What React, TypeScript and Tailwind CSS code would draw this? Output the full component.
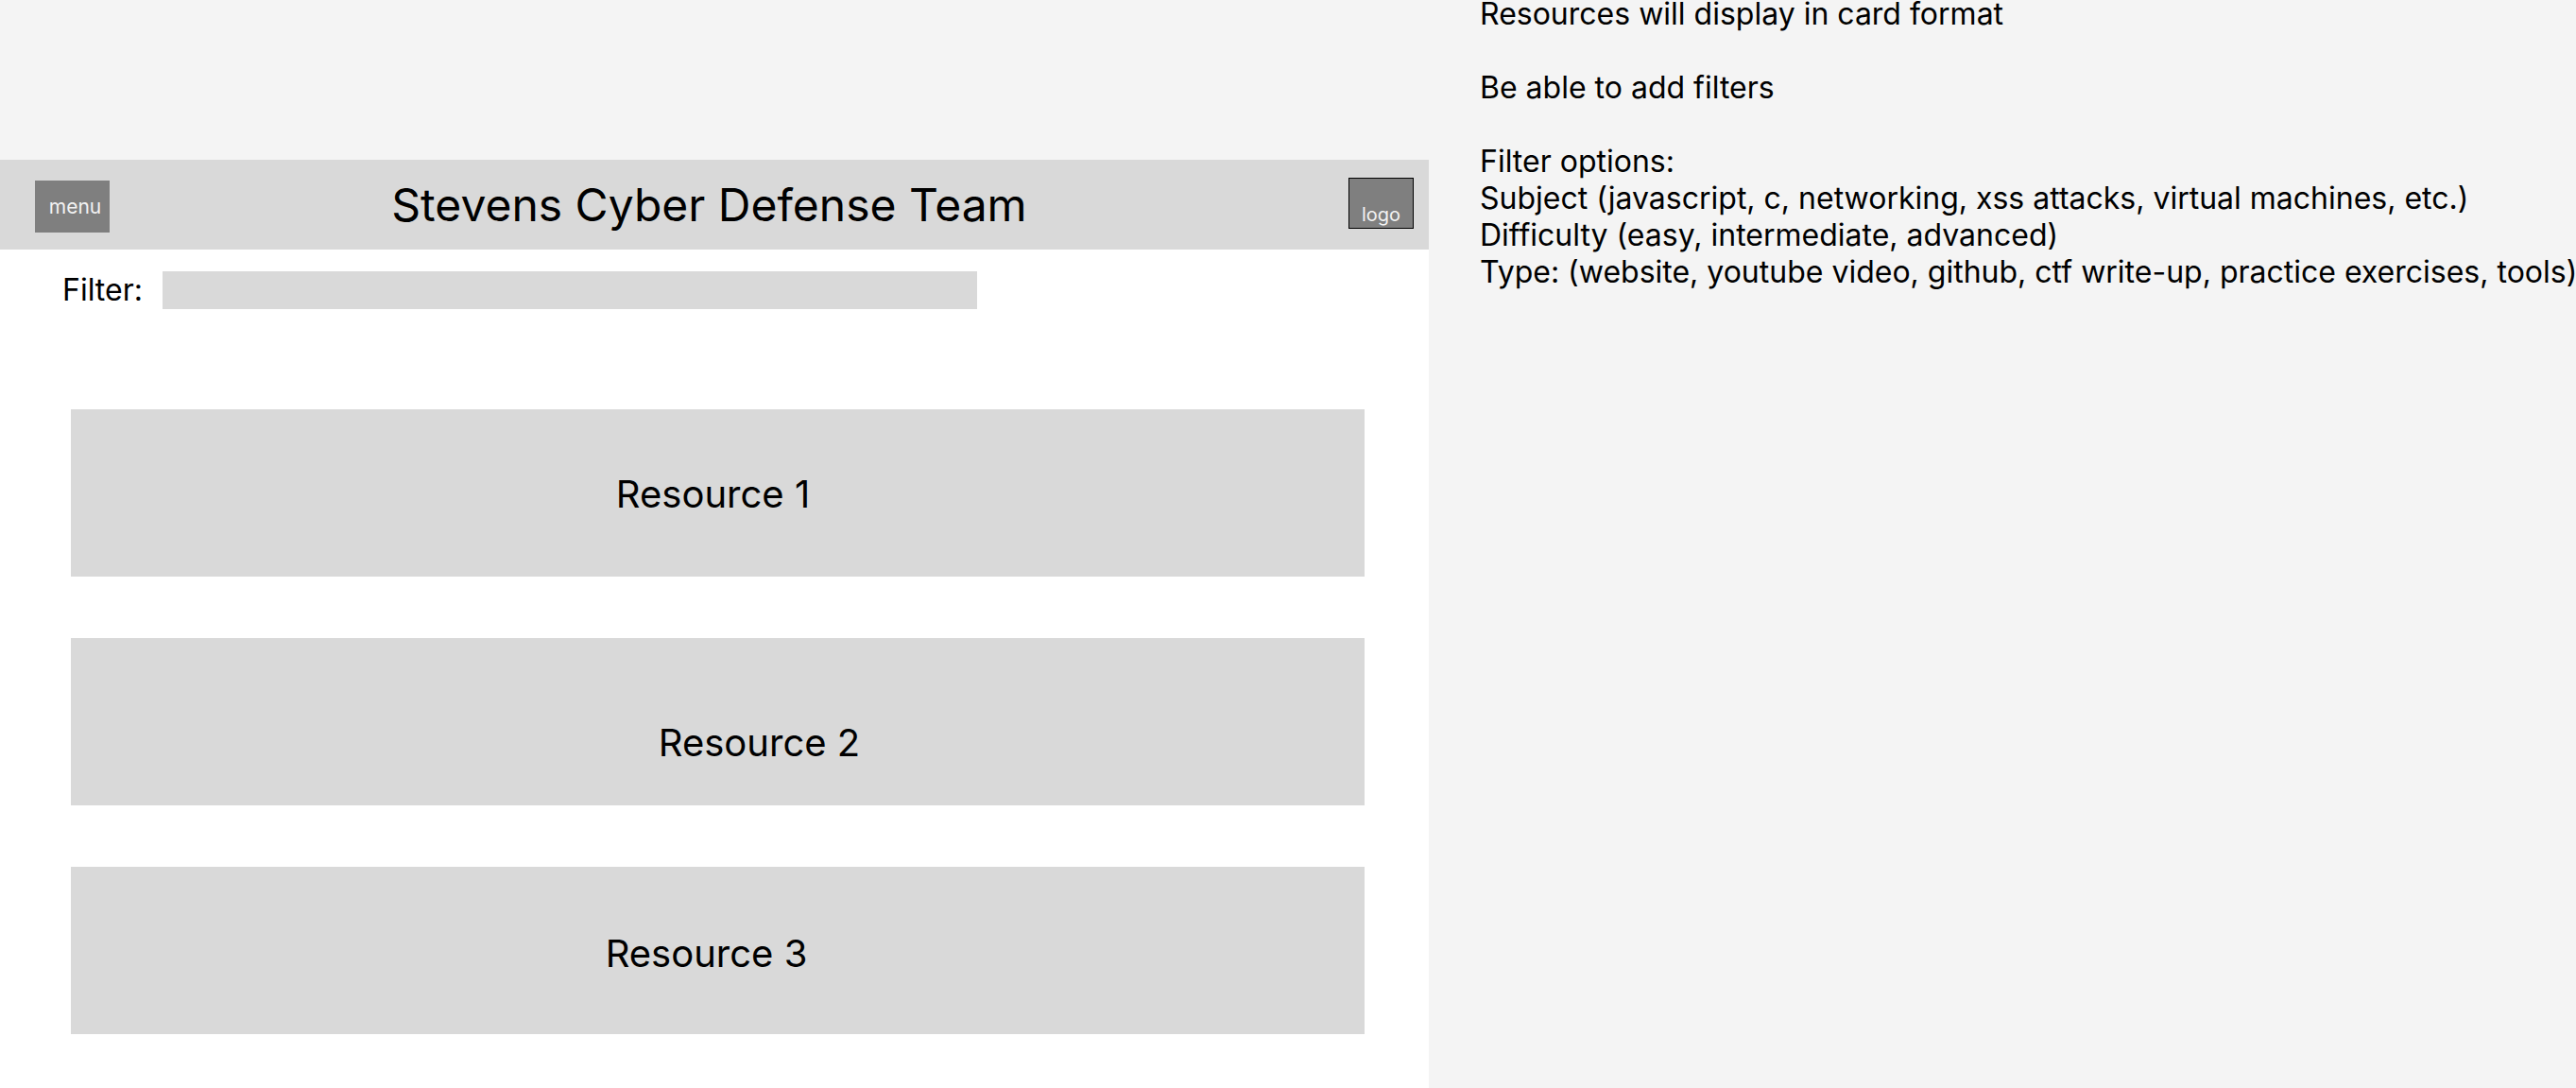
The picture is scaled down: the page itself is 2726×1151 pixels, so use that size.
import React from 'react';

const notes = [
  'Resources will display in card format',
  '',
  'Be able to add filters',
  '',
  'Filter options:',
  'Subject (javascript, c, networking, xss attacks, virtual machines, etc.)',
  'Difficulty (easy, intermediate, advanced)',
  'Type: (website, youtube video, github, ctf write-up, practice exercises, tools)',
];

export default function App() {
  return (
    <div className="w-[2726px] h-[1151px] flex overflow-hidden bg-[#f4f4f4] text-black font-['Inter',sans-serif]">
      {/* wireframe */}
      <div className="w-[1512px] shrink-0 flex flex-col">
        <div className="h-[169px] shrink-0" />
        <div className="flex-1 bg-white flex flex-col">
          <header className="h-[95px] bg-[#d9d9d9] flex items-start">
            <div className="ml-[37px] mt-[22px] w-[79px] h-[55px] bg-[#7f7f7f] flex items-center justify-center pl-[6px] text-[21px] text-[#f2f2f2]">
              menu
            </div>
            <h1 className="flex-1 pr-[42px] self-center text-center text-[48px] leading-none font-normal">
              Stevens Cyber Defense Team
            </h1>
            <div className="mr-[16px] mt-[19px] w-[69px] h-[54px] bg-[#7f7f7f] border border-black flex items-end justify-center pb-[4px] text-[20px] leading-none text-[#f2f2f2]">
              logo
            </div>
          </header>

          <div className="mt-[23px] pl-[66px] flex items-center gap-[21px]">
            <span className="text-[32px] leading-[40px]">Filter:</span>
            <div className="w-[862px] h-[40px] bg-[#d9d9d9]" />
          </div>

          <div className="mt-[106px] ml-[75px] w-[1369px] flex flex-col gap-[65px]">
            <div className="h-[177px] bg-[#d9d9d9] flex items-center justify-center pr-[10px] pt-[2px] text-[40px]">
              Resource 1
            </div>
            <div className="h-[177px] bg-[#d9d9d9] flex items-center justify-center pl-[88px] pt-[44px] text-[40px]">
              Resource 2
            </div>
            <div className="h-[177px] bg-[#d9d9d9] flex items-center justify-center pr-[24px] pt-[6px] text-[40px]">
              Resource 3
            </div>
          </div>
        </div>
      </div>

      {/* notes */}
      <div className="flex-1 pl-[54px] -mt-[5px] text-[32px] leading-[39px] whitespace-nowrap">
        {notes.map((line, i) => (
          <p key={i} className="h-[39px]">
            {line || '\u00a0'}
          </p>
        ))}
      </div>
    </div>
  );
}
